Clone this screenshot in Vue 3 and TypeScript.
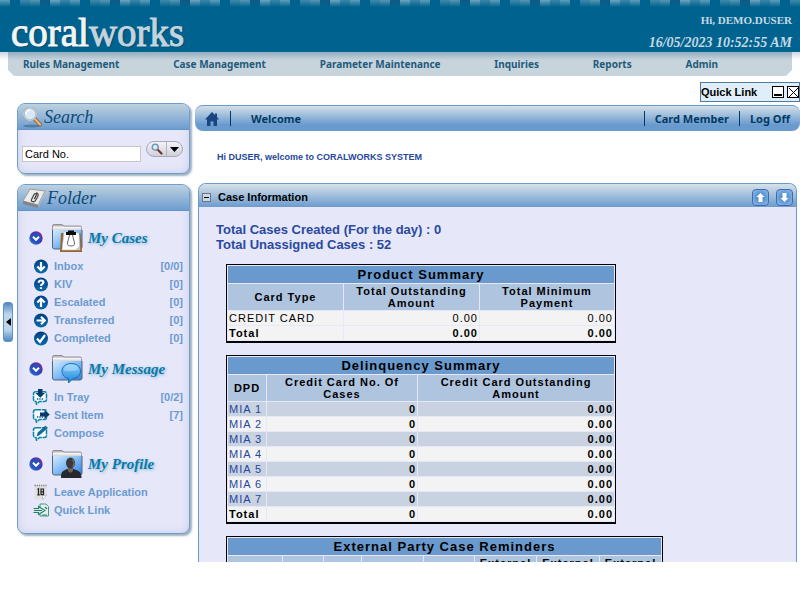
<script setup lang="ts">
import { ref } from 'vue'

interface FolderItem { label: string; icon: string; count?: string }
interface FolderGroup { title: string; badge: string; items: FolderItem[] }

const menu: string[] = ['Rules Management', 'Case Management', 'Parameter Maintenance', 'Inquiries', 'Reports', 'Admin']

const groups: FolderGroup[] = [
  {
    title: 'My Cases',
    badge: 'clipboard',
    items: [
      { label: 'Inbox', icon: 'down', count: '[0/0]' },
      { label: 'KIV', icon: 'question', count: '[0]' },
      { label: 'Escalated', icon: 'up', count: '[0]' },
      { label: 'Transferred', icon: 'right', count: '[0]' },
      { label: 'Completed', icon: 'check', count: '[0]' },
    ],
  },
  {
    title: 'My Message',
    badge: 'bubble',
    items: [
      { label: 'In Tray', icon: 'tray', count: '[0/2]' },
      { label: 'Sent Item', icon: 'sent', count: '[7]' },
      { label: 'Compose', icon: 'compose' },
    ],
  },
  {
    title: 'My Profile',
    badge: 'person',
    items: [
      { label: 'Leave Application', icon: 'calendar' },
      { label: 'Quick Link', icon: 'link' },
    ],
  },
]

const delinquency: string[] = ['MIA 1', 'MIA 2', 'MIA 3', 'MIA 4', 'MIA 5', 'MIA 6', 'MIA 7']
const search = ref<string>('Card No.')
</script>

<template>
  <div class="page">
    <svg class="defs" aria-hidden="true">
      <defs>
        <linearGradient id="gFolder" x1="0" y1="0" x2="1" y2="1">
          <stop offset="0" stop-color="#d4ebff" /><stop offset=".5" stop-color="#7fbaf5" /><stop offset="1" stop-color="#2f7be0" />
        </linearGradient>
        <linearGradient id="gTab" x1="0" y1="0" x2="0" y2="1">
          <stop offset="0" stop-color="#9b9b9b" /><stop offset=".4" stop-color="#f4f4f4" /><stop offset="1" stop-color="#b9b9b9" />
        </linearGradient>
        <linearGradient id="gBubble" x1="0" y1="0" x2="0" y2="1">
          <stop offset="0" stop-color="#8fd0fa" /><stop offset="1" stop-color="#1b86dc" />
        </linearGradient>
        <linearGradient id="gDisc" x1="0" y1="0" x2="0" y2="1">
          <stop offset="0" stop-color="#003f83" /><stop offset="1" stop-color="#0a6ab0" />
        </linearGradient>
        <linearGradient id="gBullet" x1="1" y1="0" x2="0" y2="1">
          <stop offset="0" stop-color="#b0209c" /><stop offset=".45" stop-color="#3b35b0" /><stop offset="1" stop-color="#2f7fd8" />
        </linearGradient>
      </defs>
    </svg>

    <header class="banner">
      <div class="logo"><span>coral</span><span class="works">works</span></div>
      <div class="session">
        <div class="user">Hi, DEMO.DUSER</div>
        <time class="clock">16/05/2023 10:52:55 AM</time>
      </div>
    </header>

    <div class="navwrap">
      <nav class="menu">
        <a v-for="m in menu" :key="m" href="#">{{ m }}</a>
      </nav>
    </div>

    <div class="workspace">
      <div class="rail">
        <button class="handle" type="button" aria-label="Hide side panel">
          <svg width="5" height="8" viewBox="0 0 5 8"><path d="M5 0v8L0 4z" fill="#000" /></svg>
        </button>
      </div>

      <aside class="side">
        <section class="panel">
          <h2 class="panel-head">
            <svg width="22" height="22" viewBox="0 0 22 22">
              <ellipse cx="10" cy="20" rx="9" ry="1.4" fill="#4d7da8" />
              <path d="M12.5 12.5l5.5 6" stroke="#8a5a28" stroke-width="4" stroke-linecap="round" />
              <path d="M12.5 12.5l5.5 6" stroke="#e8b878" stroke-width="2.4" stroke-linecap="round" />
              <circle cx="8" cy="8" r="6.3" fill="#d6e9f4" stroke="#909aa2" stroke-width="1.8" />
              <circle cx="8" cy="8" r="6.3" fill="none" stroke="#f1f4f6" stroke-width=".8" />
              <path d="M4 8a4 4 0 0 1 4-4" stroke="#fff" stroke-width="1.6" fill="none" />
            </svg>
            Search
          </h2>
          <form class="search" @submit.prevent>
            <input v-model="search" type="text" aria-label="Search by card number" />
            <div class="pill">
              <button type="submit" aria-label="Search">
                <svg width="12" height="12" viewBox="0 0 12 12">
                  <path d="M6.5 6.5l4 4" stroke="#7c2d22" stroke-width="2.2" stroke-linecap="round" />
                  <circle cx="4.2" cy="4.2" r="3" fill="#d3ecfb" stroke="#6e8ba5" stroke-width="1.3" />
                </svg>
              </button>
              <button type="button" aria-label="Search options">
                <svg width="9" height="5" viewBox="0 0 9 5"><path d="M0 0h9L4.5 5z" fill="#000" /></svg>
              </button>
            </div>
          </form>
        </section>

        <section class="panel folders">
          <h2 class="panel-head">
            <svg width="25" height="22" viewBox="0 0 25 22">
              <path d="M8 2l15 2-7 14-15-4z" fill="#ececec" stroke="#9b9b9b" />
              <path d="M1 14l15 4v3L1 17z" fill="#858585" />
              <path d="M16 18l7-14v3l-7 14z" fill="#b5b5b5" />
              <path d="M14 6c2.500 0 2.500 2 1.500 4l-2 3.500c-1 2-5 1.500-4-1l2.500-5c1-1.500 3-1 2.300.6l-2 4" fill="none" stroke="#4c4c4c" stroke-width="1.3" />
            </svg>
            Folder
          </h2>
          <div class="groups">
            <div v-for="g in groups" :key="g.title" class="group">
              <h3 class="group-head">
                <svg width="14" height="14" viewBox="0 0 14 14">
                  <circle cx="7" cy="7" r="5.9" fill="#2452b8" stroke="url(#gBullet)" stroke-width="1.6" />
                  <path d="M4 5.8l3 3 3-3" fill="none" stroke="#fff" stroke-width="2" />
                </svg>
                <svg class="folder" width="32" height="30" viewBox="0 0 32 30">
                  <path d="M1.500 3q0-1.500 1.500-1.500h8L13 3h16q1.500 0 1.500 1.500V9H1.500z" fill="url(#gTab)" stroke="#858585" stroke-width=".8" />
                  <path d="M1.500 7h29.500v17q0 2-2 2h-25.500q-2 0-2-2z" fill="url(#gFolder)" />
                  <path d="M1.500 7v17q0 2 2 2H29q2 0 2-2V7" fill="none" stroke="#54657a" stroke-width="1" />
                  <template v-if="g.badge === 'clipboard'">
                    <path d="M10 10h19.500l1.500 19H9z" fill="#9a632c" />
                    <path d="M13 9l15 1 1 17H11z" fill="#fff" stroke="#b9c3cf" stroke-width=".6" />
                    <path d="M24.500 27l4.500-5v5z" fill="#c8c8c8" />
                    <path d="M15 12V9h2V7.500h6V9h2v3z" fill="#0b0b0b" />
                    <path d="M18.500 12l-2 8q-.5 3 3.500 3t3.500-3l-2-8" fill="none" stroke="#626a72" stroke-width="1" />
                  </template>
                  <template v-else-if="g.badge === 'bubble'">
                    <path d="M20 9.500c5.500 0 9.500 3 9.500 7.500 0 4.500-3.500 7-7.500 7.500L17.500 29v-4.500c-4-.8-6.500-3.500-6.500-7.500 0-4.500 4-7.500 9-7.500z" fill="url(#gBubble)" stroke="#1268ad" stroke-width=".9" />
                    <path d="M12.500 16.500q1-6 7.500-6t7.500 5q-6 3-15 1z" fill="#c7e9ff" opacity=".4" />
                  </template>
                  <template v-else>
                    <path d="M10 29c0-6 1-7 6.500-9h6c6 2 8 3.500 8 9z" fill="#26282d" />
                    <path d="M17 17h5v5l-2.500 2-2.500-2z" fill="#76624f" />
                    <ellipse cx="19.500" cy="14" rx="4.500" ry="5.500" fill="#38383d" />
                    <path d="M21.500 10q3 4 .3 8" fill="none" stroke="#8b735a" stroke-width="1" />
                  </template>
                </svg>
                <span>{{ g.title }}</span>
              </h3>
              <ul>
                <li v-for="it in g.items" :key="it.label">
                  <svg width="18" height="16" viewBox="0 0 18 16">
                    <g v-if="['down', 'up', 'right', 'question', 'check'].includes(it.icon)">
                      <circle cx="9" cy="8.5" r="7" fill="url(#gDisc)" />
                      <path v-if="it.icon === 'down'" d="M9 4v8M5.3 8.5L9 12.2l3.7-3.7" class="mark" />
                      <path v-else-if="it.icon === 'up'" d="M9 13V5M5.3 8.500L9 4.800l3.700 3.700" class="mark" />
                      <path v-else-if="it.icon === 'right'" d="M4.500 8.500h8M9 4.800l3.700 3.700L9 12.200" class="mark" />
                      <path v-else-if="it.icon === 'check'" d="M5 8.500l3 3.500 5-7" class="mark" />
                      <path v-else d="M6.700 6.800c0-3 4.700-3 4.700-.3 0 1.700-2.400 1.700-2.400 3.500M9 11.300v1.700" class="mark" />
                    </g>
                    <g v-else-if="['tray', 'sent', 'compose'].includes(it.icon)">
                      <path d="M4 2.800h8.500q2 0 2 2v5.700q0 2-2 2H7.500L4.500 15.300l-.5-2.800q-2.500 0-2.500-2V4.800q0-2 2.500-2z" fill="#f4fbff" stroke="#0d83a6" stroke-width="1.5" stroke-dasharray="5 .7" />
                      <path v-if="it.icon !== 'compose'" d="M5 10h7" stroke="#0d5f8a" stroke-width="1.3" stroke-dasharray="1.300 1" />
                      <path v-if="it.icon === 'tray'" d="M6 0h4.500v4H13L8.300 8.800 3.500 4H6z" fill="#083a6b" />
                      <path v-else-if="it.icon === 'sent'" d="M8 5.500h4.500V3L17.800 7.500l-5.300 4.500V9.500H8z" fill="#083a6b" />
                      <path v-else d="M5 11l1-3.500L13.500 1l2 2L8 9.500z" fill="#0b6fa0" stroke="#084a78" stroke-width=".5" />
                    </g>
                    <g v-else-if="it.icon === 'calendar'">
                      <path d="M2.500 2h12v9.500L10.500 15.500h-8z" fill="#e0e0e0" />
                      <path d="M2.500 1.500h12" stroke="#777" stroke-width="1.5" stroke-dasharray="1.200 1" />
                      <path d="M15 11l-4.500 4.500v-4z" fill="#fff" stroke="#aaa" stroke-width=".6" />
                      <path d="M5.500 5.500L6.500 4.800V11M5.300 10.800h2.500" stroke="#222" stroke-width="1.3" fill="none" />
                      <path d="M9 5h2.500v5.700H9zM9 7.800h2.500" fill="none" stroke="#222" stroke-width="1.2" />
                    </g>
                    <g v-else>
                      <path d="M8 2h6l2.500 2.500V14H8z" fill="#e3f1ec" stroke="#4c9384" stroke-width="1" />
                      <path d="M10 13h5M13 5l2 2" stroke="#2e7d6c" stroke-width="1.2" />
                      <path d="M1.500 6.500h5V4.500l6.500 4L6.500 12.500v-2h-5" fill="#d3ebe4" stroke="#2e7d6c" stroke-width="1.1" />
                      <path d="M2 8.500h8" stroke="#2e7d6c" stroke-width="1" />
                    </g>
                  </svg>
                  <a href="#">{{ it.label }}</a>
                  <span v-if="it.count">{{ it.count }}</span>
                </li>
              </ul>
            </div>
          </div>
        </section>
      </aside>

      <main class="main">
        <div class="titlebar">
          <a href="#" class="home" aria-label="Home">
            <svg width="14" height="14" viewBox="0 0 14 14"><path d="M7 0l3 3V1.500h2V5l2 2.500h-2V14H8.500V9.500h-3V14H2V7.500H0z" fill="#1d4482" /></svg>
          </a>
          <h1>Welcome</h1>
          <a href="#" class="link">Card Member</a>
          <a href="#" class="link">Log Off</a>
        </div>

        <p class="greet">Hi DUSER, welcome to CORALWORKS SYSTEM</p>

        <section class="case">
          <div class="case-head">
            <button class="toggle" type="button" aria-label="Collapse case information"></button>
            <h2>Case Information</h2>
            <button class="arrow" type="button" aria-label="Move up">
              <svg width="9" height="9" viewBox="0 0 10 11"><path d="M5 0l5 5H7.500v6h-5V5H0z" fill="#fff" /></svg>
            </button>
            <button class="arrow" type="button" aria-label="Move down">
              <svg width="9" height="9" viewBox="0 0 10 11"><path d="M5 11l5-5H7.500V0h-5v6H0z" fill="#fff" /></svg>
            </button>
          </div>
          <div class="case-body">
            <p class="totals">Total Cases Created (For the day) : 0<br />Total Unassigned Cases : 52</p>

            <table class="grid">
              <colgroup><col class="w115" /><col class="w135" /><col class="w134" /></colgroup>
              <thead>
                <tr class="caption"><th colspan="3">Product Summary</th></tr>
                <tr class="cols"><th>Card Type</th><th>Total Outstanding Amount</th><th>Total Minimum Payment</th></tr>
              </thead>
              <tbody>
                <tr><td>CREDIT CARD</td><td class="num">0.00</td><td class="num">0.00</td></tr>
                <tr class="sum"><td>Total</td><td class="num">0.00</td><td class="num">0.00</td></tr>
              </tbody>
            </table>

            <table class="grid">
              <colgroup><col class="w38" /><col class="w150" /><col class="w196" /></colgroup>
              <thead>
                <tr class="caption"><th colspan="3">Delinquency Summary</th></tr>
                <tr class="cols"><th class="tight">DPD</th><th>Credit Card No. Of Cases</th><th class="inset">Credit Card Outstanding Amount</th></tr>
              </thead>
              <tbody>
                <tr v-for="(d, i) in delinquency" :key="d" :class="{ alt: i % 2 === 0 }">
                  <td><a href="#">{{ d }}</a></td><td class="num bold">0</td><td class="num bold">0.00</td>
                </tr>
                <tr class="sum"><td>Total</td><td class="num">0</td><td class="num">0.00</td></tr>
              </tbody>
            </table>

            <table class="grid wide">
              <colgroup>
                <col class="w54" /><col class="w40" /><col class="w37" /><col class="w61" /><col class="w50" /><col class="w61" /><col class="w62" /><col class="w61" />
              </colgroup>
              <thead>
                <tr class="caption"><th colspan="8">External Party Case Reminders</th></tr>
                <tr class="cols tall">
                  <th></th><th></th><th></th><th></th><th></th><th>External</th><th>External</th><th>External</th>
                </tr>
              </thead>
            </table>
          </div>
        </section>
      </main>

      <div class="quick">
        <span>Quick Link</span>
        <button type="button" class="min" aria-label="Minimize"></button>
        <button type="button" class="close" aria-label="Close">
          <svg width="9" height="9" viewBox="0 0 9 9"><path d="M0 0l9 9M9 0L0 9" stroke="#000" stroke-width="1" /></svg>
        </button>
      </div>
    </div>
  </div>
</template>

<style>
body {
  background: #fff;
}
</style>

<style scoped>
* {
  box-sizing: border-box;
}
.page {
  display: flex;
  flex-direction: column;
  height: 100vh;
  padding-bottom: 38px;
  overflow: hidden;
  font: 11px "Liberation Sans", Arial, sans-serif;
  color: #000;
}
.defs {
  position: absolute;
  width: 0;
  height: 0;
}
h1, h2, h3, p, ul {
  margin: 0;
  padding: 0;
}
a {
  color: inherit;
  text-decoration: none;
}
button {
  margin: 0;
  padding: 0;
  display: flex;
  align-items: center;
  justify-content: center;
}
svg {
  flex: none;
  display: block;
}

.banner {
  flex: none;
  height: 52px;
  padding: 0 8px 0 11px;
  display: flex;
  justify-content: space-between;
  background:
    linear-gradient(to bottom, transparent, #00638f) 0 0 / 100% 7px no-repeat,
    repeating-linear-gradient(to right, #5e9dbb 0 10px, #00638f 10px 20px, #4089ab 20px 30px, #5796b4 30px 40px, #0f5a85 40px 50px, #6ba5c0 50px 60px, #3b86a8 60px 70px) 0 0 / 100% 7px no-repeat,
    #00638f;
}
.logo {
  padding-top: 10px;
  font: 39px/46px "Liberation Serif", serif;
  color: #f4f4f4;
  -webkit-text-stroke: 1px currentColor;
  text-shadow: 1px 1px 2px #00405f;
}
.works {
  color: #c3d4de;
}
.session {
  text-align: right;
  color: #c6d9e4;
  font-family: "Liberation Serif", serif;
  font-weight: bold;
}
.user {
  padding-top: 12px;
  font-size: 11px;
  line-height: 16px;
}
.clock {
  display: block;
  padding-top: 7px;
  font-size: 14px;
  line-height: 16px;
  font-style: italic;
}

.navwrap {
  flex: none;
  padding: 0 8px;
  background: linear-gradient(#c9d9e2, #fff) 0 0 / 100% 8px no-repeat;
}
.menu {
  height: 24px;
  padding: 0 74px 0 15px;
  display: flex;
  justify-content: space-between;
  background: linear-gradient(#8fafc0, #c7d4dc 8px);
  clip-path: polygon(0 0, 100% 0, 100% calc(100% - 6px), calc(100% - 6px) 100%, 6px 100%, 0 calc(100% - 6px));
  font: bold 10px/25px "Noto Sans", sans-serif;
  color: #1f5b7d;
}

.workspace {
  position: relative;
  flex: 1;
  min-height: 0;
  display: flex;
  overflow: hidden;
}
.rail {
  flex: none;
  width: 17px;
  padding: 226px 0 0 3px;
}
.handle {
  width: 10px;
  height: 40px;
  border: 1px solid #5f93c8;
  border-radius: 3px;
  background: linear-gradient(#4f88c4, #bcd6ec 30%, #bcd6ec 70%, #4f88c4);
}

.side {
  flex: none;
  width: 173px;
  padding-top: 27px;
  display: flex;
  flex-direction: column;
  gap: 10px;
}
.panel {
  border: 1px solid #6e9ed0;
  border-radius: 8px;
  background: #e6e7f9;
  box-shadow: 2px 2px 2px #9fb3c3, inset 0 0 8px #c9cde6;
}
.panel-head {
  height: 26px;
  padding-left: 4px;
  display: flex;
  align-items: center;
  border-bottom: 1px solid #6294c9;
  border-radius: 7px 7px 0 0;
  background: linear-gradient(#bed1df, #6d9dd0);
  font: italic 18px/26px "Liberation Serif", serif;
  color: #0b4a78;
}
.search {
  height: 43px;
  padding: 0 6px 2px 4px;
  display: flex;
  align-items: center;
  justify-content: space-between;
}
.search input {
  width: 119px;
  height: 16px;
  margin-top: 6px;
  padding: 0 2px;
  border: 1px solid #c6c6c6;
  background: #fff;
  font: 11px "Liberation Sans", Arial, sans-serif;
  color: #000;
}
.pill {
  width: 37px;
  height: 16px;
  margin-bottom: 3px;
  display: flex;
  border: 1px solid #a6a9b8;
  border-radius: 8px;
  background: linear-gradient(#f3f3f8, #cfd0da);
}
.pill button {
  flex: 1;
  border: 0;
  background: none;
}
.pill button + button {
  border-left: 1px solid #b2b4c0;
  flex: 0 0 16px;
}

.groups {
  padding: 12px 6px 14px 11px;
  display: flex;
  flex-direction: column;
  gap: 7px;
}
.group-head {
  height: 30px;
  display: flex;
  align-items: center;
  font: italic bold 15px/30px "Liberation Serif", serif;
  color: #0a78a8;
  text-shadow: 1px 1px 3px #7fb6d4;
}
.folder {
  margin: 0 5px 0 8px;
}
.group ul {
  padding-top: 4px;
  list-style: none;
}
.group li {
  height: 18px;
  padding-left: 3px;
  display: flex;
  align-items: center;
  gap: 4px;
  font-weight: bold;
  color: #6c9bd0;
}
.group li span {
  margin-left: auto;
}
.mark {
  fill: none;
  stroke: #fff;
  stroke-width: 2.2px;
}

.main {
  flex: 1;
  min-width: 0;
  padding: 29px 0 0 5px;
  display: flex;
  flex-direction: column;
}
.titlebar {
  flex: none;
  height: 26px;
  padding: 0 10px;
  display: flex;
  align-items: center;
  border-top: 1px solid #6a9acb;
  border-radius: 8px;
  background: linear-gradient(#d3e0e8, #699ace 75%);
  font: bold 11px/15px "Noto Sans", sans-serif;
  color: #003a66;
}
.titlebar h1 {
  margin: 0 auto 0 11px;
  padding-left: 20px;
  border-left: 1px solid #003a66;
  font: inherit;
}
.link {
  padding-left: 10px;
  border-left: 1px solid #003a66;
}
.link + .link {
  margin-left: 10px;
}
.greet {
  flex: none;
  padding-left: 22px;
  font-size: 9px;
  font-weight: bold;
  line-height: 52px;
  color: #27479c;
}
.case {
  flex: 1;
  min-height: 0;
  margin: 0 3px;
  overflow: hidden;
  border: 1px solid #6a9acb;
  border-bottom: 0;
  border-radius: 8px 8px 0 0;
  background: #e6e7f9;
}
.case-head {
  height: 23px;
  padding: 3px 3px 0;
  display: flex;
  align-items: center;
  gap: 7px;
  background: linear-gradient(#d6e2e9, #6c9bce);
}
.case-head h2 {
  flex: 1;
  font-size: 11px;
  line-height: 16px;
}
.toggle {
  width: 9px;
  height: 9px;
  border: 1px solid #6e7480;
  background: linear-gradient(#000, #000) center / 5px 1px no-repeat #c9d8e4;
}
.arrow {
  width: 17px;
  height: 17px;
  border: 1px solid #4268b4;
  border-radius: 4px;
  background: radial-gradient(#3c7ac2, #8fc0ea);
}
.case-body {
  padding: 15px 0 0 27px;
}
.totals {
  margin: 0 0 12px -10px;
  font-size: 13px;
  font-weight: bold;
  line-height: 15px;
  color: #2a4a9f;
}

.grid {
  width: 390px;
  margin-bottom: 12px;
  table-layout: fixed;
  border: 1px solid #000;
  border-bottom-width: 2px;
  border-collapse: separate;
  border-spacing: 1px;
  background: #e6e7f9;
  font-size: 11px;
  letter-spacing: 1px;
}
.grid.wide {
  width: 437px;
}
.grid th, .grid td {
  padding: 0 1px;
  height: 14px;
  line-height: 14px;
}
.grid td {
  background: #f3f3f3;
}
.grid .caption th {
  height: 17px;
  background: #6a9acd;
  font-size: 13px;
  line-height: 17px;
}
.grid .cols th {
  height: 26px;
  background: #afc4df;
  line-height: 12px;
  padding: 0 8px;
}
.grid .cols .tight {
  padding: 0;
}
.grid .cols .inset {
  padding: 0 20px;
}
.grid .cols.tall th {
  height: 40px;
  padding: 1px 0 0;
  vertical-align: top;
}
.grid .num {
  text-align: right;
}
.grid .bold, .grid .sum td {
  font-weight: bold;
}
.grid .alt td {
  background: #c8d2e1;
}
.grid td a {
  color: #27479c;
}
.w115 { width: 115px; }
.w135 { width: 135px; }
.w134 { width: 134px; }
.w38 { width: 38px; }
.w150 { width: 150px; }
.w196 { width: 196px; }
.w54 { width: 54px; }
.w40 { width: 40px; }
.w37 { width: 37px; }
.w61 { width: 61px; }
.w50 { width: 50px; }
.w62 { width: 62px; }

.quick {
  position: absolute;
  top: 6px;
  right: 0;
  width: 100px;
  height: 20px;
  display: flex;
  align-items: center;
  gap: 3px;
  border: 1px solid #4f7aa0;
  background: #dfeef8;
  font-weight: bold;
}
.quick span {
  flex: 1;
}
.quick button {
  width: 12px;
  height: 12px;
  border: 1px solid #000;
  background: #fff;
}
.quick .min {
  background: linear-gradient(#000, #000) center 7px / 8px 2px no-repeat #fff;
}
</style>
